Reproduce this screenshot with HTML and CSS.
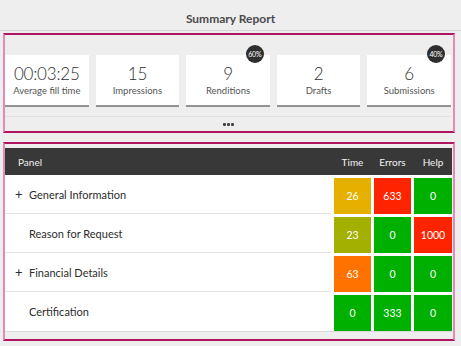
FILE: index.html
```html
<!DOCTYPE html>
<html>
<head>
<meta charset="utf-8">
<link rel="stylesheet" href="styles.css">
</head>
<body>
<div class="title-bar">Summary Report</div>

<section class="box summary">
  <div class="cards">
    <div class="card"><div class="value">00:03:25</div><div class="label">Average fill time</div></div>
    <div class="card"><div class="value">15</div><div class="label">Impressions</div></div>
    <div class="card"><div class="value">9</div><div class="label">Renditions</div><span class="badge">60%</span></div>
    <div class="card"><div class="value">2</div><div class="label">Drafts</div></div>
    <div class="card"><div class="value">6</div><div class="label">Submissions</div><span class="badge">40%</span></div>
  </div>
  <div class="more"><span class="dot"></span><span class="dot"></span><span class="dot"></span></div>
</section>

<section class="box panels">
  <div class="table">
    <div class="row head">
      <div class="hname">Panel</div>
      <div class="hcell">Time</div>
      <div class="hcell">Errors</div>
      <div class="hcell">Help</div>
    </div>
    <div class="row">
      <div class="name"><span class="plus">+</span>General Information</div>
      <div class="cell"><span class="blk amber">26</span></div>
      <div class="cell"><span class="blk red">633</span></div>
      <div class="cell"><span class="blk green">0</span></div>
    </div>
    <div class="row">
      <div class="name"><span class="plus"></span>Reason for Request</div>
      <div class="cell"><span class="blk olive">23</span></div>
      <div class="cell"><span class="blk green">0</span></div>
      <div class="cell"><span class="blk red">1000</span></div>
    </div>
    <div class="row">
      <div class="name"><span class="plus">+</span>Financial Details</div>
      <div class="cell"><span class="blk orange">63</span></div>
      <div class="cell"><span class="blk green">0</span></div>
      <div class="cell"><span class="blk green">0</span></div>
    </div>
    <div class="row last">
      <div class="name"><span class="plus"></span>Certification</div>
      <div class="cell"><span class="blk green">0</span></div>
      <div class="cell"><span class="blk green">333</span></div>
      <div class="cell"><span class="blk green">0</span></div>
    </div>
  </div>
</section>
</body>
</html>
```

FILE: styles.css
```css
* { box-sizing: border-box; }
html, body { margin: 0; padding: 0; }
body {
  background: #eeeeee;
  font-family: Lato, "Liberation Sans", sans-serif;
  color: #333;
  width: 461px;
  height: 346px;
  overflow: hidden;
}
.title-bar {
  height: 31px;
  border-bottom: 1px solid #d6d6d6;
  display: flex;
  align-items: center;
  justify-content: center;
  font-size: 12px;
  font-weight: bold;
  color: #4a4a4a;
  padding-top: 7px;
}
.box {
  margin-left: 3px;
  width: 452px;
  border-style: solid;
  border-width: 2px;
  border-color: #b0155f #e38ab9 #b0155f #e38ab9;
}
.summary {
  margin-top: 2px;
  padding: 20px 2px 0 0;
}
.cards {
  display: flex;
  gap: 7px;
}
.card {
  position: relative;
  flex: 1;
  height: 50px;
  background: #fff;
  box-shadow: 0 2px 0 #939393;
  display: flex;
  flex-direction: column;
  align-items: center;
  justify-content: center;
}
.value {
  font-size: 17px;
  font-weight: 300;
  color: #2f2f2f;
  line-height: 20px;
  letter-spacing: -0.2px;
}
.label {
  font-size: 9.5px;
  color: #555;
  line-height: 12px;
  margin-top: 1px;
}
.badge {
  position: absolute;
  top: -10px;
  right: 6px;
  width: 18px;
  height: 18px;
  border-radius: 50%;
  background: #2e2e2e;
  color: #fff;
  font-size: 7px;
  display: flex;
  align-items: center;
  justify-content: center;
  letter-spacing: -0.3px;
}
.more {
  margin-top: 11px;
  border-top: 1px solid #e2e2e2;
  height: 15px;
  display: flex;
  align-items: center;
  justify-content: center;
  gap: 1px;
}
.dot {
  width: 3px;
  height: 3px;
  background: #444;
  border-radius: 1px;
}
.panels {
  margin-top: 9px;
  padding: 4px 1px 7px 0;
}
.table {
  border-bottom: 1px solid #d9d9d9;
}
.row {
  display: grid;
  grid-template-columns: 1fr 37px 37px 38px;
  column-gap: 3px;
  background: #fff;
  height: 39px;
}
.row.head {
  background: #383838;
  height: 27px;
  color: #f2f2f2;
  font-size: 10px;
  align-items: center;
}
.hname {
  padding-left: 13px;
}
.hcell {
  text-align: center;
}
.name {
  display: flex;
  align-items: center;
  padding-left: 10px;
  font-size: 11px;
  color: #2c2c2c;
  border-bottom: 1px solid #e3e3e3;
  height: 39px;
}
.row.last .name { border-bottom: none; }
.plus {
  width: 14px;
  font-size: 13px;
  display: inline-block;
}
.cell {
  padding-top: 3px;
}
.blk {
  display: flex;
  align-items: center;
  justify-content: center;
  height: 36px;
  color: #fff;
  font-size: 10.5px;
}
.amber { background: #e5b000; }
.red { background: #ff2400; }
.green { background: #00b000; }
.olive { background: #a3b000; }
.orange { background: #ff7200; }
```
